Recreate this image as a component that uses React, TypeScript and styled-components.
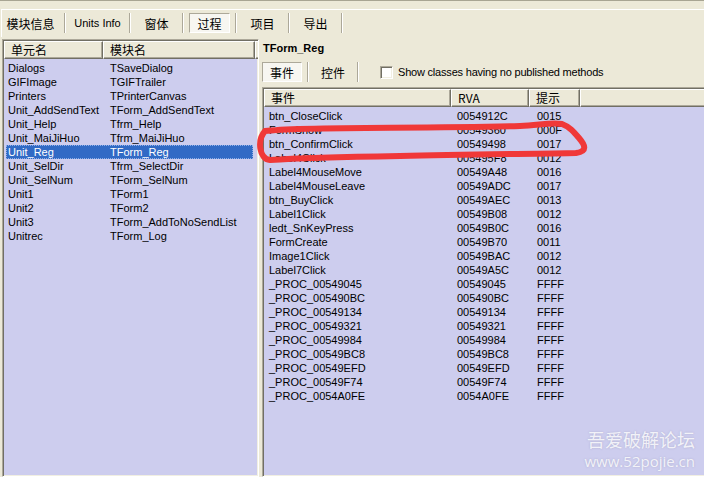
import styled, { createGlobalStyle } from 'styled-components';

const GlobalStyle = createGlobalStyle`
  html, body {
    margin: 0;
    padding: 0;
  }
  body {
    background: #ECE9D8;
    font-family: "Liberation Sans", Arial, sans-serif;
  }
`;

const CJK = `"Noto Sans CJK SC", "Liberation Sans", sans-serif`;
const LAVENDER = '#CDCDEE';

const units = [
  ['Dialogs', 'TSaveDialog'],
  ['GIFImage', 'TGIFTrailer'],
  ['Printers', 'TPrinterCanvas'],
  ['Unit_AddSendText', 'TForm_AddSendText'],
  ['Unit_Help', 'Tfrm_Help'],
  ['Unit_MaiJiHuo', 'Tfrm_MaiJiHuo'],
  ['Unit_Reg', 'TForm_Reg'],
  ['Unit_SelDir', 'Tfrm_SelectDir'],
  ['Unit_SelNum', 'TForm_SelNum'],
  ['Unit1', 'TForm1'],
  ['Unit2', 'TForm2'],
  ['Unit3', 'TForm_AddToNoSendList'],
  ['Unitrec', 'TForm_Log'],
];

const events = [
  ['btn_CloseClick', '0054912C', '0015'],
  ['FormShow', '00549360', '000F'],
  ['btn_ConfirmClick', '00549498', '0017'],
  ['Label4Click', '005495F8', '0012'],
  ['Label4MouseMove', '00549A48', '0016'],
  ['Label4MouseLeave', '00549ADC', '0017'],
  ['btn_BuyClick', '00549AEC', '0013'],
  ['Label1Click', '00549B08', '0012'],
  ['ledt_SnKeyPress', '00549B0C', '0016'],
  ['FormCreate', '00549B70', '0011'],
  ['Image1Click', '00549BAC', '0012'],
  ['Label7Click', '00549A5C', '0012'],
  ['_PROC_00549045', '00549045', 'FFFF'],
  ['_PROC_005490BC', '005490BC', 'FFFF'],
  ['_PROC_00549134', '00549134', 'FFFF'],
  ['_PROC_00549321', '00549321', 'FFFF'],
  ['_PROC_00549984', '00549984', 'FFFF'],
  ['_PROC_00549BC8', '00549BC8', 'FFFF'],
  ['_PROC_00549EFD', '00549EFD', 'FFFF'],
  ['_PROC_00549F74', '00549F74', 'FFFF'],
  ['_PROC_0054A0FE', '0054A0FE', 'FFFF'],
];

function App() {
  return (
    <Page>
      <GlobalStyle />
      <TopEdge />
      <Toolbar>
        <ToolButton w={57} cjk>模块信息</ToolButton>
        <Sep />
        <ToolButton w={53}>Units Info</ToolButton>
        <Sep />
        <ToolButton w={41} cjk>窗体</ToolButton>
        <Sep />
        <ToolButton w={41} cjk pressed>过程</ToolButton>
        <Sep />
        <ToolButton w={41} cjk>项目</ToolButton>
        <Sep />
        <ToolButton w={41} cjk>导出</ToolButton>
        <Sep />
      </Toolbar>

      <Body>
        <LeftPane>
          <ListView>
            <Header>
              <HeaderCell w={99}>单元名</HeaderCell>
              <HeaderCell w={152}>模块名</HeaderCell>
              <HeaderCell />
            </Header>
            <Rows>
              {units.map(([u, m]) => (
                <Row key={u} selected={u === 'Unit_Reg'}>
                  <Cell w={98} pad={2}>{u}</Cell>
                  <Cell pad={6}>{m}</Cell>
                </Row>
              ))}
            </Rows>
          </ListView>
        </LeftPane>

        <RightPane>
          <FormTitle>TForm_Reg</FormTitle>
          <TabRow>
            <ToolButton w={40} cjk pressed>事件</ToolButton>
            <Sep />
            <ToolButton w={38} cjk>控件</ToolButton>
            <Sep />
            <CheckLabel>
              <CheckBox />
              Show classes having no published methods
            </CheckLabel>
          </TabRow>
          <EventList>
            <Header>
              <HeaderCell w={187}>事件</HeaderCell>
              <HeaderCell w={78}>RVA</HeaderCell>
              <HeaderCell w={51}>提示</HeaderCell>
              <HeaderCell />
            </Header>
            <Rows>
              {events.map(([name, rva, hint]) => (
                <Row key={name}>
                  <Cell w={185} pad={3}>{name}</Cell>
                  <Cell w={78} pad={6}>{rva}</Cell>
                  <Cell pad={8}>{hint}</Cell>
                </Row>
              ))}
            </Rows>
          </EventList>
        </RightPane>
      </Body>

      <Marker viewBox="0 0 704 477" width={704} height={477}>
        <path
          d="M270 160 C259 159 257 140 265 131 C300 126 420 129 520 126 C540 125 552 122 562 124 C570 127 574 132 579 138 C585 145 588 151 576 153 C540 154 470 154 400 156 C340 157 300 158 270 160 Z"
          fill="none"
          stroke="#F03838"
          strokeWidth={6}
          strokeLinejoin="round"
        />
      </Marker>

      <Watermark>
        <WmTitle>吾爱破解论坛</WmTitle>
        <WmUrl>www.52pojie.cn</WmUrl>
      </Watermark>
    </Page>
  );
}

const Page = styled.div`
  position: relative;
  width: 704px;
  height: 477px;
  overflow: hidden;
  background: #ECE9D8;
  display: flex;
  flex-direction: column;
  font-size: 11px;
  color: #000;
`;

const TopEdge = styled.div`
  height: 8px;
  border-top: 1px solid #A8A593;
`;

const Toolbar = styled.div`
  box-sizing: border-box;
  height: 28px;
  margin-left: 1px;
  padding-top: 3px;
  border-top: 1px solid #fff;
  border-left: 1px solid #fff;
  display: flex;
  align-items: flex-start;
`;

const ToolButton = styled.div<{ w: number; cjk?: boolean; pressed?: boolean }>`
  box-sizing: border-box;
  flex: none;
  width: ${(p) => p.w}px;
  height: 20px;
  display: flex;
  align-items: center;
  justify-content: center;
  white-space: nowrap;
  font-family: ${(p) => (p.cjk ? CJK : `"Liberation Sans", Arial, sans-serif`)};
  font-size: ${(p) => (p.cjk ? '12px' : '11px')};
  border: 1px solid transparent;
  ${(p) =>
    p.pressed &&
    `
    border-color: #ACA899 #fff #fff #ACA899;
    background: #F7F6F1;
  `}
`;

const Sep = styled.div`
  flex: none;
  width: 0;
  height: 20px;
  margin: 0 5px;
  border-left: 1px solid #ACA899;
  border-right: 1px solid #fff;
`;

const Body = styled.div`
  flex: 1;
  min-height: 0;
  margin-top: 2px;
  display: flex;
`;

const LeftPane = styled.div`
  width: 257px;
  margin-left: 2px;
  display: flex;
  flex-direction: column;
`;

const RightPane = styled.div`
  width: 450px;
  flex: none;
  margin-left: 3px;
  display: flex;
  flex-direction: column;
`;

const ListView = styled.div`
  flex: 1;
  min-height: 0;
  padding: 1px;
  background: ${LAVENDER};
  border: 1px solid;
  border-color: #ACA899 #fff #fff #ACA899;
  box-shadow: inset 1px 1px 0 #716F64, inset -1px -1px 0 #F1EFE2;
  overflow: hidden;
`;

const EventList = styled(ListView)`
  margin-top: 5px;
`;

const Header = styled.div`
  display: flex;
  height: 18px;
  background: #ECE9D8;
`;

const HeaderCell = styled.div<{ w?: number }>`
  box-sizing: border-box;
  ${(p) => (p.w ? `width: ${p.w}px; flex: none;` : 'flex: 1;')}
  height: 18px;
  padding-left: 6px;
  line-height: 16px;
  white-space: nowrap;
  font-family: ${CJK};
  font-size: 12px;
  border: 1px solid;
  border-color: #fff #716F64 #716F64 #fff;
  box-shadow: inset -1px -1px 0 #ACA899;
`;

const Rows = styled.div`
  padding-top: 2px;
`;

const Row = styled.div<{ selected?: boolean }>`
  display: flex;
  height: 14px;
  line-height: 14px;
  margin: 0 4px 0 2px;
  white-space: nowrap;
  background: ${(p) => (p.selected ? '#316AC5' : 'transparent')};
  color: ${(p) => (p.selected ? '#fff' : '#000')};
  outline: ${(p) => (p.selected ? '1px dotted #8FB0E8' : 'none')};
  outline-offset: -1px;
`;

const Cell = styled.div<{ w?: number; pad: number }>`
  box-sizing: border-box;
  ${(p) => (p.w ? `width: ${p.w}px; flex: none;` : 'flex: 1;')}
  padding-left: ${(p) => p.pad}px;
  overflow: hidden;
`;

const FormTitle = styled.div`
  height: 18px;
  line-height: 18px;
  padding-left: 1px;
  font-weight: bold;
  font-size: 11px;
`;

const TabRow = styled.div`
  margin-top: 5px;
  height: 20px;
  display: flex;
  align-items: center;
`;

const CheckLabel = styled.div`
  display: flex;
  align-items: center;
  margin-left: 16px;
  gap: 5px;
  white-space: nowrap;
  font-size: 11px;
  letter-spacing: -0.2px;
`;

const CheckBox = styled.div`
  box-sizing: border-box;
  width: 13px;
  height: 13px;
  background: #fff;
  border: 1px solid;
  border-color: #ACA899 #fff #fff #ACA899;
  box-shadow: inset 1px 1px 0 #716F64, inset -1px -1px 0 #F1EFE2;
`;

const Marker = styled.svg`
  position: absolute;
  left: 0;
  top: 0;
  pointer-events: none;
`;

const Watermark = styled.div`
  position: absolute;
  right: 9px;
  top: 427px;
  text-align: right;
  color: rgba(255, 255, 255, 0.82);
  text-shadow: 0 0 2px rgba(120, 120, 150, 0.35);
`;

const WmTitle = styled.div`
  font-family: ${CJK};
  font-size: 18px;
  line-height: 25px;
`;

const WmUrl = styled.div`
  font-family: "Open Sans", "Liberation Sans", sans-serif;
  font-size: 15px;
  line-height: 18px;
`;

export default App;
